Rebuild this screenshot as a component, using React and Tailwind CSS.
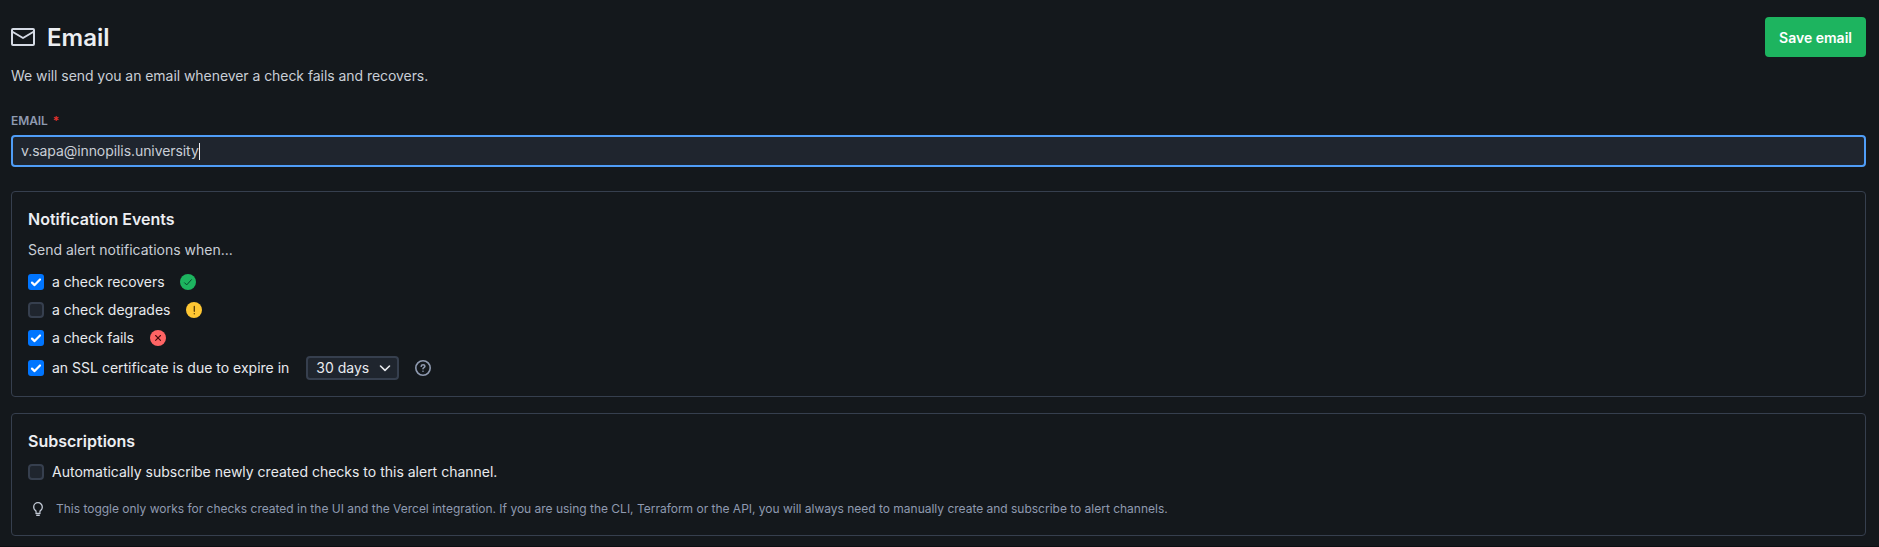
function Check({ on }) {
  if (!on) return <span className="size-4 shrink-0 rounded-[4px] border-2 border-[#363f4e] bg-[#1f252e]" />;
  return (
    <span className="flex size-4 shrink-0 items-center justify-center rounded-[3px] bg-[#0075ff]">
      <svg className="size-4" viewBox="0 0 16 16" fill="none" stroke="#fff" strokeWidth="2.2" strokeLinecap="round" strokeLinejoin="round">
        <path d="M4 8.6l2.6 2.5 5.4-5.6" />
      </svg>
    </span>
  );
}

function Status({ kind }) {
  const fill = { ok: "#1db45f", warn: "#ffc733", fail: "#ff6464" }[kind];
  return (
    <svg className="ml-4 size-4 shrink-0" viewBox="0 0 16 16" fill="none" strokeLinecap="round" strokeLinejoin="round">
      <circle cx="8" cy="8" r="8" fill={fill} />
      {kind === "ok" && <path d="M4.6 8.8l2.1 2.100 4.700-5.200" stroke="#07472a" strokeWidth="1" />}
      {kind === "warn" && <path d="M8.300 4.500v4.800M8.300 11.700v.1" stroke="#5a3c04" strokeWidth="1.3" />}
      {kind === "fail" && <path d="M5.600 5.500l4.900 4.900M10.500 5.500l-4.900 4.900" stroke="#4a0d0d" strokeWidth="1.1" />}
    </svg>
  );
}

function Row({ on, label, children, className = "h-7", textClass = "" }) {
  return (
    <div className={`flex items-center ${className}`}>
      <Check on={on} />
      <span className={`ml-2 text-[#e8eaee] ${textClass}`}>{label}</span>
      {children}
    </div>
  );
}

export default function App() {
  return (
    <main className="flex h-[547px] w-full flex-col overflow-hidden border-b border-[#0d0e12] bg-[#14181c] pt-[17px] pr-[13px] pl-[11px] font-['Inter',sans-serif] text-sm text-[#c9ced6]">
      <header className="flex h-10 items-center justify-between">
        <div className="flex items-center gap-3">
          <svg className="h-[18px] w-6" viewBox="0 0 24 18" fill="none" stroke="#d5dae4" strokeWidth="2" strokeLinejoin="round">
            <rect x="1" y="1" width="22" height="16" rx="1" />
            <path d="M1 3.5l11 6.5 11-6.5" />
          </svg>
          <h1 className="pt-0.5 text-2xl font-semibold text-[#eceef2]">Email</h1>
        </div>
        <button className="h-10 w-[101px] rounded bg-[#1db45f] pt-0.5 text-sm font-semibold text-white">Save email</button>
      </header>
      <p className="mt-[9px] leading-5 tracking-[-0.055px]">We will send you an email whenever a check fails and recovers.</p>
      <label className="mt-[27px] flex h-4 gap-[5px] text-xs font-semibold tracking-[-0.1px] text-[#8f9ab0]">
        EMAIL <span className="text-[#e5322d]">*</span>
      </label>
      <div className="mt-1.5 flex h-8 shrink-0 items-center rounded border-2 border-[#4f9df7] bg-[#1f252e] px-2">
        <span className="tracking-[-0.07px]">v.sapa@innopilis.university</span>
        <span className="h-[17px] w-px bg-[#eceef2]" />
      </div>
      <section className="mt-6 h-[206px] shrink-0 rounded border border-[#363f4e] px-4 pt-[15px]">
        <h2 className="text-base font-semibold text-[#eceef2]">Notification Events</h2>
        <p className="mt-[9px] leading-5">Send alert notifications when...</p>
        <div className="mt-2">
          <Row on label="a check recovers" textClass="tracking-[-0.07px]"><Status kind="ok" /></Row>
          <Row label="a check degrades"><Status kind="warn" /></Row>
          <Row on label="a check fails" textClass="tracking-[-0.07px]"><Status kind="fail" /></Row>
          <Row on label="an SSL certificate is due to expire in" className="h-8">
            <button className="ml-[17px] flex h-6 w-[93px] items-center justify-between rounded border-2 border-[#363f4e] bg-[#1f252e] pr-1.5 pl-2 text-[#e8eaee]">
              30 days
              <svg className="h-3 w-3" viewBox="0 0 12 12" fill="none" stroke="#e8eaee" strokeWidth="1.6" strokeLinecap="round" strokeLinejoin="round">
                <path d="M1.5 4l4.5 4.4L10.5 4" />
              </svg>
            </button>
            <svg className="ml-4 size-4" viewBox="0 0 16 16" fill="none" stroke="#8f9ab0" strokeWidth="1.6" strokeLinecap="round">
              <circle cx="8" cy="8" r="7.2" />
              <path d="M6.2 6.300c.2-2 3.700-2 3.700 0 0 1.300-1.900 1.300-1.900 2.500M8 11.200v.1" />
            </svg>
          </Row>
        </div>
      </section>
      <section className="mt-4 h-[123px] shrink-0 rounded border border-[#363f4e] px-4 pt-[15px]">
        <h2 className="text-base font-semibold text-[#eceef2]">Subscriptions</h2>
        <Row label="Automatically subscribe newly created checks to this alert channel." className="mt-[5px] h-7" />
        <div className="mt-[13px] flex h-5 items-center text-xs text-[#8f9ab0]">
          <svg className="ml-[5px] h-[14px] w-[10px]" viewBox="0 0 10 14" fill="none" stroke="#c3cad6" strokeWidth="1.3" strokeLinecap="round" strokeLinejoin="round">
            <path d="M3 10.200V9C1.500 8 .7 6.700.7 5a4.300 4.300 0 0 1 8.600 0C9.300 6.700 8.500 8 7 9v1.200M3 11.500h4M3.700 13.300h2.600" />
          </svg>
          <span className="ml-[13px] tracking-[-0.01px]">This toggle only works for checks created in the UI and the Vercel integration. If you are using the CLI, Terraform or the API, you will always need to manually create and subscribe to alert channels.</span>
        </div>
      </section>
    </main>
  );
}
